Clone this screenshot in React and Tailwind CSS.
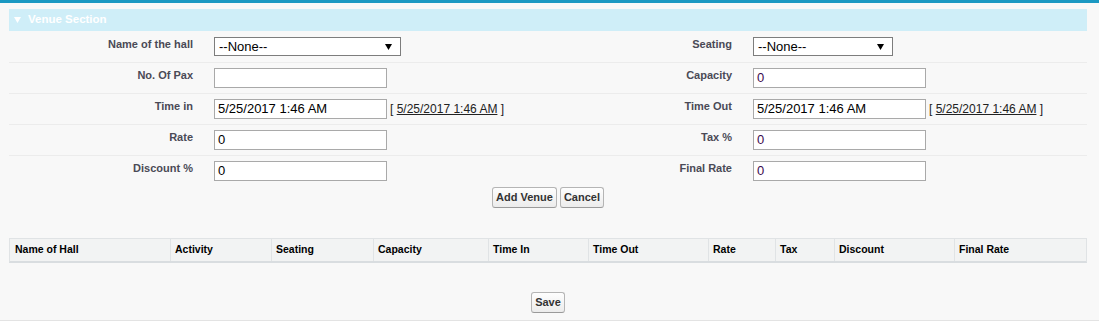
import React from "react";

const FONT = "font-['Liberation_Sans',Arial,sans-serif]";

function TextBox({ value, purple }) {
  return (
    <div
      className={`w-[173px] h-[20px] border border-[#a9a9a9] bg-white text-[13px] leading-[18px] pl-[3px] whitespace-nowrap overflow-hidden ${
        purple ? "text-[#3b0a4f]" : "text-black"
      }`}
    >
      {value}
    </div>
  );
}

function Select({ width }) {
  return (
    <div
      className={`${width} h-[19px] border border-[#7d7d7d] bg-white flex items-center justify-between pl-[4px] pr-[8px] text-[13px] text-black`}
    >
      <span className="leading-none">--None--</span>
      <svg width="7" height="6" viewBox="0 0 7 6">
        <path d="M0 0 L7 0 L3.5 6 Z" fill="#000" />
      </svg>
    </div>
  );
}

function DateField({ value }) {
  return (
    <div className="flex items-start">
      <TextBox value={value} />
      <span className="ml-[3px] mt-[3px] text-[12px] leading-[14px] text-[#222] whitespace-nowrap">
        [ <span className="underline">5/25/2017 1:46 AM</span> ]
      </span>
    </div>
  );
}

function Row({ l1, c1, l2, c2, last }) {
  return (
    <div
      className={`flex h-[31px] ${last ? "" : "border-b border-[#ececec]"}`}
    >
      <div className="w-[194px] shrink-0 pr-[10px] pt-[5px] text-right text-[11px] font-bold text-[#4a4a56] leading-[14px]">
        {l1}
      </div>
      <div className="w-[345px] shrink-0 pl-[11px] pt-[5px]">{c1}</div>
      <div className="w-[194px] shrink-0 pr-[10px] pt-[5px] text-right text-[11px] font-bold text-[#4a4a56] leading-[14px]">
        {l2}
      </div>
      <div className="flex-1 pl-[11px] pt-[5px]">{c2}</div>
    </div>
  );
}

function Btn({ children }) {
  return (
    <button className="h-[21px] px-[3px] border border-[#b5b5b5] border-b-[#9a9a9a] rounded-[3px] bg-linear-to-b from-[#fefefe] to-[#ececec] text-[11px] font-bold text-[#333] leading-none">
      {children}
    </button>
  );
}

const cols = [
  { label: "Name of Hall", w: "w-[160px]", first: true },
  { label: "Activity", w: "w-[101px]" },
  { label: "Seating", w: "w-[102px]" },
  { label: "Capacity", w: "w-[115px]" },
  { label: "Time In", w: "w-[100px]" },
  { label: "Time Out", w: "w-[120px]" },
  { label: "Rate", w: "w-[67px]" },
  { label: "Tax", w: "w-[59px]" },
  { label: "Discount", w: "w-[120px]" },
  { label: "Final Rate", w: "flex-1" },
];

export default function App() {
  return (
    <div className={`${FONT} w-[1099px] h-[328px] bg-white overflow-hidden`}>
      <div className="h-[321px] bg-[#f8f8f8] border-b border-[#e3e3e3]">
        <div className="h-[3px] bg-[#1a98c2]" />
        <div className="px-[9px] pt-[6px] w-[1096px]">
          <div className="h-[22px] bg-[#cfeef8] flex items-center pl-[5px] text-white text-[11.5px] font-bold">
            <svg width="7" height="6" viewBox="0 0 7 6" className="mr-[7px]">
              <path d="M0 0 L7 0 L3.5 6 Z" fill="#fff" />
            </svg>
            Venue Section
          </div>
          <div className="mt-px">
            <Row
              l1="Name of the hall"
              c1={<Select width="w-[187px]" />}
              l2="Seating"
              c2={<Select width="w-[140px]" />}
            />
            <Row
              l1="No. Of Pax"
              c1={<TextBox value="" />}
              l2="Capacity"
              c2={<TextBox value="0" purple />}
            />
            <Row
              l1="Time in"
              c1={<DateField value="5/25/2017 1:46 AM" />}
              l2="Time Out"
              c2={<DateField value="5/25/2017 1:46 AM" />}
            />
            <Row
              l1="Rate"
              c1={<TextBox value="0" />}
              l2="Tax %"
              c2={<TextBox value="0" purple />}
            />
            <Row
              l1="Discount %"
              c1={<TextBox value="0" />}
              l2="Final Rate"
              c2={<TextBox value="0" purple />}
              last
            />
          </div>
          <div className="flex justify-center gap-[3px]">
            <Btn>Add Venue</Btn>
            <Btn>Cancel</Btn>
          </div>
          <div className="mt-[30px] h-[25px] flex border border-[#e0e3e5] border-b-2 border-b-[#d9dde0] bg-[#f2f3f3]">
            {cols.map((c) => (
              <div
                key={c.label}
                className={`${c.w} ${
                  c.first ? "pl-[5px]" : "border-l border-[#e0e3e5] pl-[4px]"
                } flex items-center text-[10.5px] font-bold text-black`}
              >
                {c.label}
              </div>
            ))}
          </div>
          <div className="mt-[29px] flex justify-center">
            <Btn>Save</Btn>
          </div>
        </div>
      </div>
    </div>
  );
}
